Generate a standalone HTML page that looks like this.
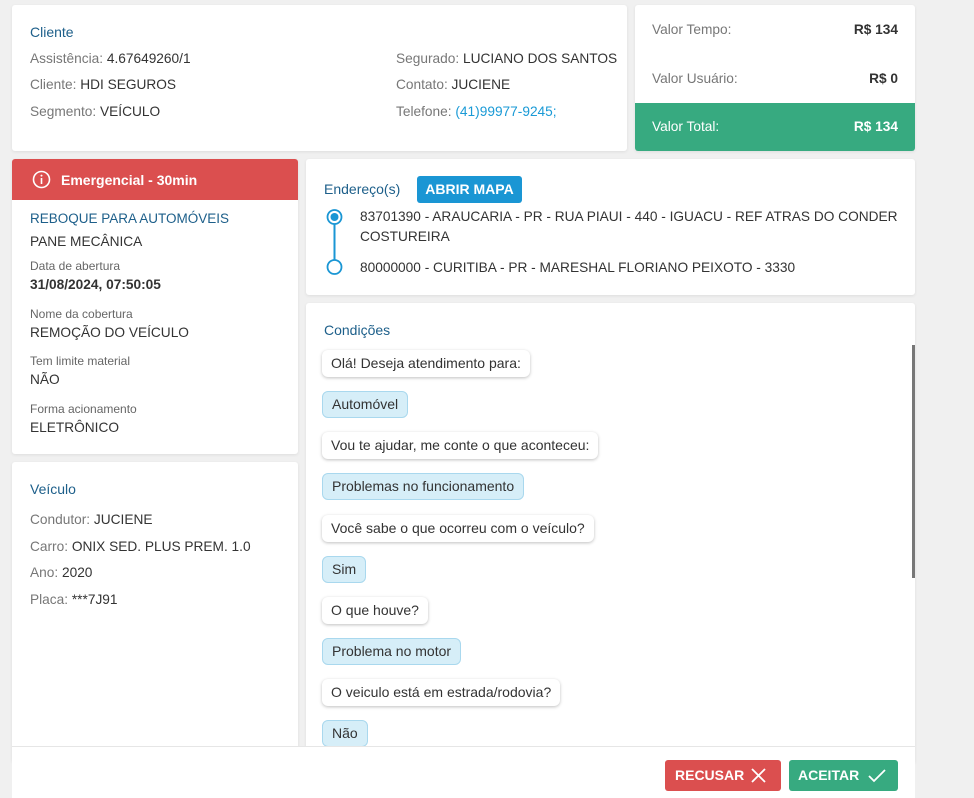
<!DOCTYPE html><html><head><meta charset="utf-8"><style>
*{box-sizing:border-box;margin:0;padding:0}
body{width:974px;height:798px;background:#f0f0f0;font-family:"Liberation Sans",sans-serif;font-size:13.7px;color:#333;position:relative;overflow:hidden}
.card{position:absolute;background:#fff;border-radius:3px;box-shadow:0 1px 3px rgba(0,0,0,.08)}
.t{position:absolute;white-space:nowrap}
.h{color:#1d5f8a;font-size:14px}
.g{color:#777}
.s{font-size:12px;color:#666}
.b{font-weight:bold}
.bub{position:absolute;left:322px;height:27px;padding:0 9px;line-height:27px;border-radius:6px;background:#fff;box-shadow:0 1px 3px rgba(0,0,0,.25);white-space:nowrap;font-size:14px;color:#333}
.ans{background:#d6eef8;border:1px solid #a9d8ee;box-shadow:none;line-height:25px}
</style></head><body>
<div class="card" style="left:12px;top:5px;width:615px;height:146px"></div>
<div class="t h" style="left:30px;top:24px">Cliente</div>
<div class="t" style="left:30px;top:51px"><span class="g">Assistência:</span> 4.67649260/1</div>
<div class="t" style="left:30px;top:77px"><span class="g">Cliente:</span> HDI SEGUROS</div>
<div class="t" style="left:30px;top:104px"><span class="g">Segmento:</span> VEÍCULO</div>
<div class="t" style="left:396px;top:51px"><span class="g">Segurado:</span> LUCIANO DOS SANTOS</div>
<div class="t" style="left:396px;top:77px"><span class="g">Contato:</span> JUCIENE</div>
<div class="t" style="left:396px;top:104px"><span class="g">Telefone:</span> <span style="color:#1a9ad6">(41)99977-9245;</span></div>

<div class="card" style="left:635px;top:5px;width:280px;height:146px"></div>
<div class="t g" style="left:652px;top:22px">Valor Tempo:</div><div class="t b" style="right:76px;top:22px">R$ 134</div>
<div class="t g" style="left:652px;top:71px">Valor Usuário:</div><div class="t b" style="right:76px;top:71px">R$ 0</div>
<div style="position:absolute;left:635px;top:103px;width:280px;height:48px;background:#37aa80;border-radius:0 0 3px 3px"></div>
<div class="t" style="left:652px;top:119px;color:#fff">Valor Total:</div><div class="t b" style="right:76px;top:119px;color:#fff">R$ 134</div>

<div class="card" style="left:12px;top:159px;width:286px;height:295px"></div>
<div style="position:absolute;left:12px;top:159px;width:286px;height:41px;background:#db4f4f;border-radius:3px 3px 0 0"></div>
<svg style="position:absolute;left:32px;top:170px" width="19" height="19" viewBox="0 0 19 19"><circle cx="9.5" cy="9.5" r="8" fill="none" stroke="#fff" stroke-width="1.6"/><rect x="8.7" y="8" width="1.6" height="6" fill="#fff"/><circle cx="9.5" cy="5.6" r="1" fill="#fff"/></svg>
<div class="t b" style="left:61px;top:172px;color:#fff;font-size:14px">Emergencial - 30min</div>
<div class="t h" style="left:30px;top:211px;font-size:13.5px">REBOQUE PARA AUTOMÓVEIS</div>
<div class="t" style="left:30px;top:234px">PANE MECÂNICA</div>
<div class="t s" style="left:30px;top:259px">Data de abertura</div>
<div class="t b" style="left:30px;top:277px">31/08/2024, 07:50:05</div>
<div class="t s" style="left:30px;top:307px">Nome da cobertura</div>
<div class="t" style="left:30px;top:325px">REMOÇÃO DO VEÍCULO</div>
<div class="t s" style="left:30px;top:354px">Tem limite material</div>
<div class="t" style="left:30px;top:372px">NÃO</div>
<div class="t s" style="left:30px;top:402px">Forma acionamento</div>
<div class="t" style="left:30px;top:420px">ELETRÔNICO</div>

<div class="card" style="left:12px;top:462px;width:286px;height:300px"></div>
<div class="t h" style="left:30px;top:481px">Veículo</div>
<div class="t" style="left:30px;top:512px"><span class="g">Condutor:</span> JUCIENE</div>
<div class="t" style="left:30px;top:539px"><span class="g">Carro:</span> ONIX SED. PLUS PREM. 1.0</div>
<div class="t" style="left:30px;top:565px"><span class="g">Ano:</span> 2020</div>
<div class="t" style="left:30px;top:592px"><span class="g">Placa:</span> ***7J91</div>

<div class="card" style="left:306px;top:159px;width:609px;height:136px"></div>
<div class="t h" style="left:324px;top:181px">Endereço(s)</div>
<div style="position:absolute;left:417px;top:176px;width:105px;height:27px;background:#1a96d4;border-radius:3px;color:#fff;font-weight:bold;font-size:14px;line-height:27px;text-align:center">ABRIR MAPA</div>
<svg style="position:absolute;left:325px;top:207px" width="20" height="70"><circle cx="9.5" cy="10" r="7" fill="#fff" stroke="#1a96d4" stroke-width="1.8"/><circle cx="9.5" cy="10" r="4" fill="#1a96d4"/><line x1="9.5" y1="17" x2="9.5" y2="53" stroke="#1a96d4" stroke-width="2"/><circle cx="9.5" cy="60" r="7" fill="#fff" stroke="#1a96d4" stroke-width="1.8"/></svg>
<div class="t" style="left:360px;top:209px">83701390 - ARAUCARIA - PR - RUA PIAUI - 440 - IGUACU - REF ATRAS DO CONDER</div>
<div class="t" style="left:360px;top:229px">COSTUREIRA</div>
<div class="t" style="left:360px;top:260px">80000000 - CURITIBA - PR - MARESHAL FLORIANO PEIXOTO - 3330</div>

<div class="card" style="left:306px;top:303px;width:609px;height:460px"></div>
<div class="t h" style="left:324px;top:322px">Condições</div>
<div style="position:absolute;left:912px;top:345px;width:3px;height:233px;background:#777"></div>
<div class="bub" style="top:350px">Olá! Deseja atendimento para:</div>
<div class="bub ans" style="top:391px">Automóvel</div>
<div class="bub" style="top:432px">Vou te ajudar, me conte o que aconteceu:</div>
<div class="bub ans" style="top:473px">Problemas no funcionamento</div>
<div class="bub" style="top:515px">Você sabe o que ocorreu com o veículo?</div>
<div class="bub ans" style="top:556px">Sim</div>
<div class="bub" style="top:597px">O que houve?</div>
<div class="bub ans" style="top:638px">Problema no motor</div>
<div class="bub" style="top:679px">O veiculo está em estrada/rodovia?</div>
<div class="bub ans" style="top:720px">Não</div>

<div style="position:absolute;left:12px;top:746px;width:903px;height:52px;background:#fff;border-top:1px solid #e6e6e6"></div>
<div style="position:absolute;left:665px;top:760px;width:116px;height:31px;background:#db4f4f;border-radius:3px;color:#fff;font-weight:bold;font-size:14px;line-height:31px;padding-left:10px">RECUSAR<svg style="position:absolute;left:86px;top:8px" width="15" height="15"><path d="M1 1L14 14M14 1L1 14" stroke="#fff" stroke-width="1.8"/></svg></div>
<div style="position:absolute;left:789px;top:760px;width:109px;height:31px;background:#37aa80;border-radius:3px;color:#fff;font-weight:bold;font-size:14px;line-height:31px;padding-left:9px">ACEITAR<svg style="position:absolute;left:79px;top:8px" width="18" height="15"><path d="M1 8L6 13L17 2" fill="none" stroke="#fff" stroke-width="1.8"/></svg></div>
</body></html>
